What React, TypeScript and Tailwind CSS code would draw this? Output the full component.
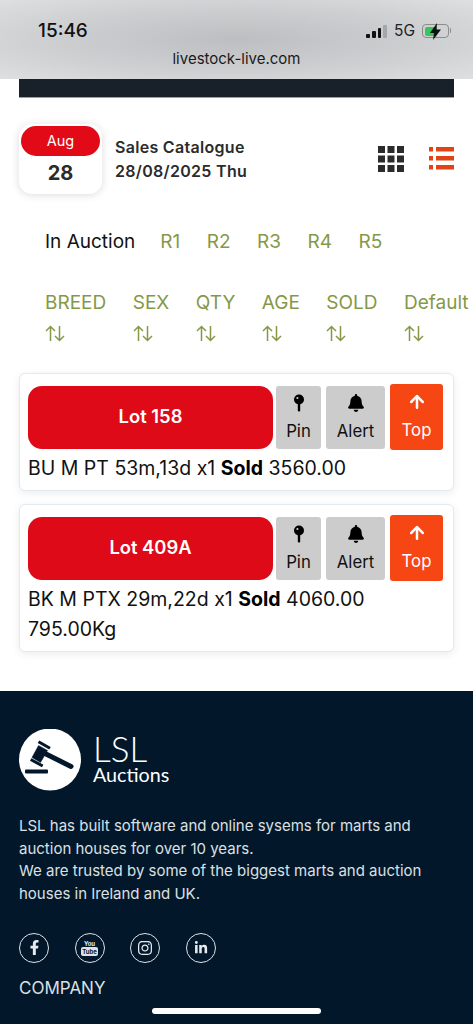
import React from 'react';
import { FaBell, FaFacebookF, FaInstagram, FaLinkedinIn } from 'react-icons/fa';
import { ArrowUp } from 'lucide-react';

const tabs = ['R1', 'R2', 'R3', 'R4', 'R5'];
const sorts = ['BREED', 'SEX', 'QTY', 'AGE', 'SOLD', 'Default'];

const SortArrows = () => (
  <svg width="20" height="17" viewBox="0 0 20 17" fill="none" stroke="#859848" strokeWidth="1.5">
    <path d="M5.5 16V1.5M1 6l4.5-4.5L10 6" />
    <path d="M14.5 1v14.5M10 11l4.5 4.5L19 11" />
  </svg>
);

const PinIcon = () => (
  <svg width="12" height="18" viewBox="0 0 12 18" fill="black">
    <circle cx="6" cy="5.5" r="5" />
    <rect x="4.8" y="9" width="2.4" height="8.5" rx="1" />
    <circle cx="4.4" cy="4" r="1.1" fill="#ccc" />
  </svg>
);

const GridIcon = () => (
  <svg width="26" height="26" viewBox="0 0 26 26" fill="#2b2b2b">
    {[0, 9.5, 19].map((y) =>
      [0, 9.5, 19].map((x) => <rect key={`${x}-${y}`} x={x} y={y} width="7" height="7" />)
    )}
  </svg>
);

const ListIcon = () => (
  <svg width="25" height="23" viewBox="0 0 25 23" fill="#e04316">
    {[0, 9, 18].map((y) => (
      <g key={y}>
        <rect x="0" y={y} width="4" height="4.5" />
        <rect x="7" y={y} width="18" height="4.5" />
      </g>
    ))}
  </svg>
);

const Gavel = () => (
  <svg width="62" height="62" viewBox="0 0 62 62" className="shrink-0">
    <circle cx="31" cy="30.500" r="31" fill="white" />
    <g fill="#03172a" stroke="#03172a">
      <rect x="6" y="40.500" width="23" height="4" rx="1" stroke="none" />
      <path d="M27 25L52 37.500" strokeWidth="5" strokeLinecap="round" />
      <path d="M19.500 12.800L31 19.300" strokeWidth="3" />
      <path d="M11.700 30.500L23.700 37" strokeWidth="3" />
      <path d="M19.500 16.500L28.500 21.500L21.500 33.500L13 28.500Z" strokeWidth="0.500" />
    </g>
  </svg>
);

const SocialCircle = ({ children }: { children: React.ReactNode }) => (
  <div className="w-[30px] h-[30px] rounded-full border-[1.5px] border-[#dfe3e6] flex flex-col items-center justify-center text-[#e8ebed] shrink-0">
    {children}
  </div>
);

const LotCard = ({ lot, details, price, extra }: { lot: string; details: string; price: string; extra?: string }) => (
  <div className="mx-[19px] bg-white border border-[#dfeaf3] rounded-[6px] shadow-[0_2px_8px_rgba(0,0,0,0.08)] pl-[8px] pr-[10px] pt-[10px] pb-[7px]">
    <div className="flex items-center">
      <button className="w-[245px] h-[63px] bg-[#de0a17] rounded-[14px] text-white font-semibold text-[18.4px]">{lot}</button>
      <div className="ml-[3px] w-[45px] h-[63px] bg-[#cccccc] rounded-[3px] flex flex-col items-center pt-[8px]">
        <PinIcon />
        <span className="text-[16.8px] leading-[22px] mt-[8px] text-[#111]">Pin</span>
      </div>
      <div className="ml-[5px] w-[59px] h-[63px] bg-[#cccccc] rounded-[3px] flex flex-col items-center pt-[8px]">
        <FaBell className="w-[18px] h-[18px] text-black" />
        <span className="text-[16.8px] leading-[22px] mt-[8px] text-[#111]">Alert</span>
      </div>
      <div className="ml-[5px] w-[53px] h-[66px] bg-[#f64614] rounded-[3px] flex flex-col items-center pt-[8px]">
        <ArrowUp className="w-[20px] h-[20px] text-white" strokeWidth={3} />
        <span className="text-[16.8px] leading-[22px] mt-[7px] text-white">Top</span>
      </div>
    </div>
    <p className="text-[19.5px] leading-[30px] text-[#111] mt-[3px] whitespace-nowrap">
      {details} <b className="font-bold text-black">Sold</b> {price}
      {extra && <><br />{extra}</>}
    </p>
  </div>
);

const App = () => {
  return (
    <div className="relative w-[473px] h-[1024px] overflow-hidden bg-white font-['Inter','Liberation_Sans',sans-serif]">
      <div className="h-[79px] bg-[radial-gradient(ellipse_at_center,#bdbec1_0%,#cfd0d2_60%,#dedfe0_100%)] relative">
        <div className="flex items-center justify-between pl-[38px] pr-[24px] pt-[18px]">
          <span className="text-[19px] leading-[26px] font-medium text-[#111]">15:46</span>
          <div className="flex items-center gap-[7px]">
            <div className="flex items-end gap-[2px] h-[13px] w-[21px]">
              <div className="w-[4px] h-[4px] bg-[#111] rounded-[1px]" />
              <div className="w-[3.5px] h-[7px] bg-[#111] rounded-[1px]" />
              <div className="w-[3.5px] h-[10px] bg-[#111] rounded-[1px]" />
              <div className="w-[3.5px] h-[13px] bg-[#a5a6a8] rounded-[1px]" />
            </div>
            <span className="text-[15.5px] text-[#222]">5G</span>
            <div className="relative w-[27px] h-[14px] border border-[#8b8c8e] rounded-[4px] p-[1.5px]">
              <div className="w-[12px] h-full bg-[#35c759] rounded-[2px]" />
              <svg className="absolute left-[6px] -top-[2px]" width="13" height="17" viewBox="0 0 13 17" fill="#111">
                <path d="M8 0L1 10h4l-1 7 8-10.500H7.500z" />
              </svg>
              <div className="absolute -right-[3px] top-[3px] w-[1.5px] h-[5px] bg-[#8b8c8e] rounded-r-[1px]" />
            </div>
          </div>
        </div>
        <p className="text-center text-[15px] leading-[18px] mt-[6px] text-[#1a1a1a]">livestock-live.com</p>
      </div>

      <div className="mx-[19px] h-[19px] bg-[#18202a] border-b border-[#9aa0a6]" />

      <div className="flex items-center pl-[19px] pr-[19px] mt-[26px]">
        <div className="w-[83px] h-[70px] bg-white rounded-[13px] shadow-[0_1px_8px_rgba(0,0,0,0.14)] pt-[2px] px-[2px] text-center shrink-0">
          <div className="h-[30px] bg-[#e20a17] rounded-[15px] text-white text-[14.5px] leading-[30px]">Aug</div>
          <div className="text-[20px] leading-[32px] mt-[1px] font-bold text-[#2b2b2b]">28</div>
        </div>
        <div className="ml-[13px] flex-1 text-[16px] leading-[24px] font-semibold text-[#2b2b2b] tracking-[0.3px]">
          <div>Sales Catalogue</div>
          <div>28/08/2025 Thu</div>
        </div>
        <div className="flex items-center gap-[25px] mt-[-1px]">
          <GridIcon />
          <ListIcon />
        </div>
      </div>

      <div className="flex items-center pl-[45px] mt-[35px] text-[19px] leading-[26px] text-[#859848]">
        <span className="text-[#111] mr-[25px]">In Auction</span>
        <div className="flex gap-[26.5px]">
          {tabs.map((t) => (
            <span key={t}>{t}</span>
          ))}
        </div>
      </div>

      <div className="flex pl-[45px] gap-[26.5px] mt-[35px] text-[19px] leading-[26px] text-[#859848] whitespace-nowrap">
        {sorts.map((s) => (
          <div key={s} className="flex flex-col items-start">
            <span>{s}</span>
            <div className="mt-[9px]">
              <SortArrows />
            </div>
          </div>
        ))}
      </div>

      <div className="flex flex-col gap-[13px] mt-[31px]">
        <LotCard lot="Lot 158" details="BU M PT 53m,13d x1" price="3560.00" />
        <LotCard lot="Lot 409A" details="BK M PTX 29m,22d x1" price="4060.00" extra="795.00Kg" />
      </div>

      <footer className="mt-[39px] h-[340px] bg-[#03172a] px-[19px] pt-[38px]">
        <div className="flex items-start">
          <Gavel />
          <div className="ml-[12px] mt-[4px] text-white font-['Lato',sans-serif]">
            <div className="text-[35px] leading-[30px] font-light">LSL</div>
            <div className="text-[19.7px] leading-[20px] mt-[2px]">Auctions</div>
          </div>
        </div>
        <p className="mt-[24px] text-[15px] leading-[22.7px] text-[#dbe0e3]">
          LSL has built software and online sysems for marts and auction houses for over 10 years.
          <br />
          We are trusted by some of the biggest marts and auction houses in Ireland and UK.
        </p>
        <div className="flex gap-[25.5px] mt-[27px]">
          <SocialCircle>
            <FaFacebookF className="w-[15px] h-[15px]" />
          </SocialCircle>
          <SocialCircle>
            <span className="text-[6px] leading-[7px] font-bold">You</span>
            <span className="bg-[#dfe3e6] text-[#03172a] text-[6px] leading-[9px] font-bold rounded-[2px] px-[1.5px]">Tube</span>
          </SocialCircle>
          <SocialCircle>
            <FaInstagram className="w-[16px] h-[16px]" />
          </SocialCircle>
          <SocialCircle>
            <FaLinkedinIn className="w-[14px] h-[14px]" />
          </SocialCircle>
        </div>
        <p className="mt-[14px] text-[17px] leading-[22px] text-[#dbe0e3]">COMPANY</p>
      </footer>

      <div className="absolute left-[152px] top-[1008px] w-[169px] h-[6px] rounded-full bg-white" />
    </div>
  );
};

export default App;
